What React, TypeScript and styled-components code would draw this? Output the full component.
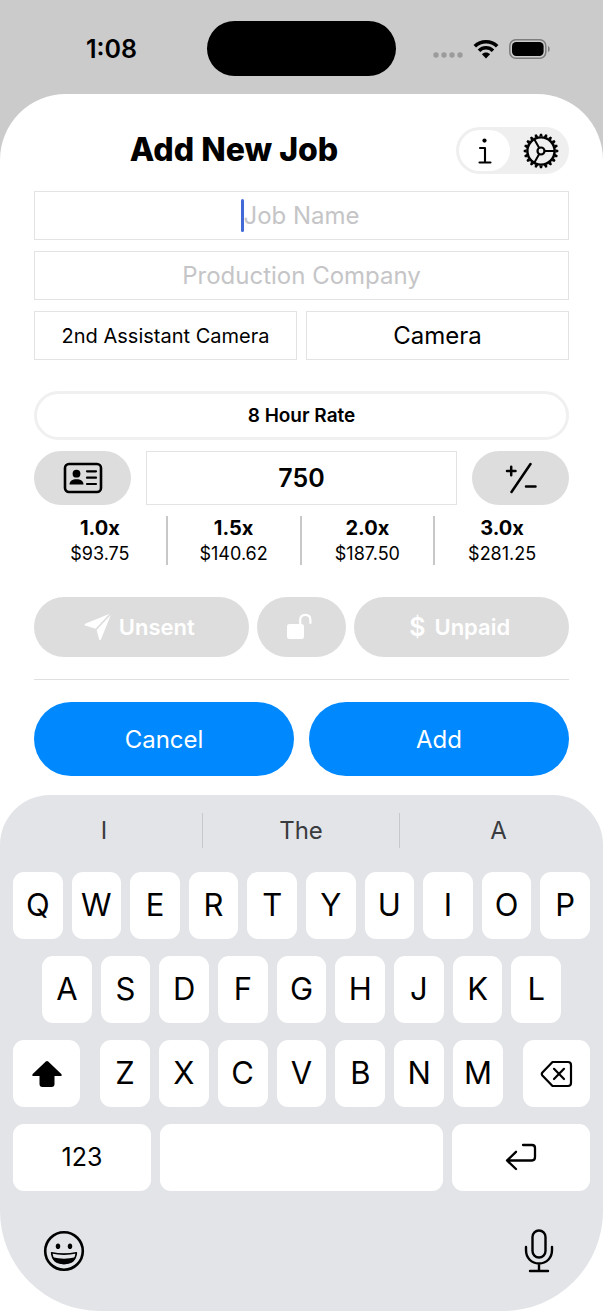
import React from "react";
import styled, { createGlobalStyle, css } from "styled-components";

const GlobalStyle = createGlobalStyle`
  *, *::before, *::after { box-sizing: border-box; }
  body { margin: 0; background: #cbcbcb; }
  body, button, input { font-family: Inter, "Liberation Sans", sans-serif; color: #000; }
  button { border: 0; margin: 0; padding: 0; background: none; cursor: pointer; }
  svg { display: block; flex: none; }
`;

const Screen = styled.div`
  min-height: 100vh;
  display: flex;
  flex-direction: column;
  background: #cbcbcb;
`;

const StatusBar = styled.header`
  display: grid;
  grid-template-columns: 1fr auto 1fr;
  align-items: center;
  height: 94px;
  padding: 3px 52px 0;
`;

const Clock = styled.time`
  padding-left: 34px;
  font-size: 25px;
  font-weight: 600;
  line-height: 30px;
`;

const Island = styled.div`
  width: 189px;
  height: 55px;
  border-radius: 28px;
  background: #000;
`;

const StatusIcons = styled.div`
  display: flex;
  justify-content: flex-end;
  align-items: center;
  gap: 10px;
`;

const Sheet = styled.main`
  flex: 1;
  display: flex;
  flex-direction: column;
  border-radius: 66px 66px 0 0;
  background: #fff;
`;

const Form = styled.form`
  display: flex;
  flex-direction: column;
  padding: 33px 34px 19px;
`;

const TitleRow = styled.div`
  display: flex;
  align-items: center;
  height: 47px;
  margin-bottom: 17px;
`;

const Title = styled.h1`
  flex: 1;
  margin: 0;
  padding: 0 22px 2px 0;
  text-align: center;
  font-size: 32px;
  font-weight: 800;
  line-height: 40px;
`;

const Segments = styled.fieldset`
  display: grid;
  grid-template-columns: 51px 1fr;
  gap: 5px;
  width: 113px;
  height: 47px;
  margin: 0;
  padding: 3px;
  border: 0;
  border-radius: 24px;
  background: #efefef;
`;

const Segment = styled.label`
  position: relative;
  display: flex;
  align-items: center;
  justify-content: center;
  border-radius: 21px;
  cursor: pointer;
  &:has(input:checked) { background: #fff; }
`;

const SegmentInput = styled.input`
  position: absolute;
  inset: 0;
  margin: 0;
  opacity: 0;
`;

const Fields = styled.div`
  display: flex;
  flex-direction: column;
  gap: 11px;
`;

const FieldRow = styled.div`
  display: grid;
  grid-template-columns: 1fr 1fr;
  gap: 9px;
`;

const boxed = css`
  border: 1px solid #e3e3e3;
  background: #fff;
  text-align: center;
`;

const FieldWrap = styled.div`
  position: relative;
`;

const Field = styled.input`
  ${boxed}
  display: block;
  width: 100%;
  height: 49px;
  padding: 0 8px;
  border-radius: 0;
  outline: 0;
  font-size: 24px;
  &::placeholder { color: #c5c5c7; opacity: 1; }
`;

const Caret = styled.span`
  position: absolute;
  left: calc(50% - 61px);
  top: 8px;
  width: 3px;
  height: 33px;
  border-radius: 2px;
  background: #4169d8;
`;

const Picker = styled.button<{ $size: number }>`
  ${boxed}
  height: 49px;
  font-size: ${(p) => p.$size}px;
`;

const RateType = styled.button`
  height: 49px;
  margin: 31px 0 11px;
  border: 3px solid #f0f0f0;
  border-radius: 25px;
  font-size: 19px;
  font-weight: 600;
`;

const RateRow = styled.div`
  display: grid;
  grid-template-columns: 97px 1fr 97px;
  gap: 15px;
`;

const GrayButton = styled.button`
  display: flex;
  align-items: center;
  justify-content: center;
  border-radius: 27px;
  background: #ddd;
`;

const RateInput = styled(Field)`
  height: 54px;
  font-size: 25px;
  font-weight: 600;
`;

const Multipliers = styled.dl`
  display: grid;
  grid-template-columns: repeat(4, 1fr);
  margin: 11px 0 32px;
`;

const Multiplier = styled.div`
  height: 49px;
  text-align: center;
  &:not(:last-child) { border-right: 2px solid #c8c8c8; }
`;

const Factor = styled.dt`
  font-size: 20px;
  font-weight: 700;
  line-height: 25px;
`;

const Amount = styled.dd`
  margin: 0;
  font-size: 18px;
  line-height: 26px;
`;

const StateRow = styled.div`
  display: grid;
  grid-template-columns: 215fr 90fr 215fr;
  gap: 8px;
  padding-bottom: 22px;
  border-bottom: 1px solid #dfdfdf;
`;

const StateButton = styled.button`
  display: flex;
  align-items: center;
  justify-content: center;
  gap: 7px;
  height: 60px;
  padding-right: 4px;
  border-radius: 30px;
  background: #ddd;
  color: #fff;
  font-size: 22px;
  font-weight: 600;
`;

const ActionRow = styled.div`
  display: grid;
  grid-template-columns: 1fr 1fr;
  gap: 15px;
  margin-top: 22px;
`;

const ActionButton = styled.button`
  height: 74px;
  border-radius: 37px;
  background: #0088ff;
  color: #fff;
  font-size: 24px;
`;

const Keyboard = styled.section`
  flex: 1;
  display: flex;
  flex-direction: column;
  padding: 18px 13px 0;
  border-radius: 50px 50px 100px 100px;
  background: #e2e4e8;
`;

const Suggestions = styled.div`
  display: grid;
  grid-template-columns: repeat(3, 1fr);
  margin: 0 -7px 24px;
`;

const Suggestion = styled.button`
  height: 35px;
  color: #3a3b3e;
  font-size: 24px;
  &:not(:last-child) { border-right: 1px solid #c6c8cc; }
`;

const KeyRows = styled.div`
  display: flex;
  flex-direction: column;
  gap: 17px;
`;

const KeyRow = styled.div<{ $inset?: number; $gap?: number }>`
  display: flex;
  gap: ${(p) => p.$gap ?? 9}px;
  padding: 0 ${(p) => p.$inset ?? 0}px;
`;

const Letters = styled.div`
  flex: 1;
  display: flex;
  gap: 9px;
`;

const Key = styled.button<{ $width?: number; $size?: number; $icon?: boolean }>`
  display: flex;
  align-items: center;
  justify-content: center;
  flex: ${(p) => (p.$width ? `0 0 ${p.$width}px` : "1 1 0")};
  min-width: 0;
  height: 67px;
  padding-bottom: ${(p) => (p.$icon ? 0 : 2)}px;
  border-radius: 11px;
  background: #fff;
  font-size: ${(p) => p.$size ?? 31}px;
`;

const KeyboardFooter = styled.div`
  display: flex;
  justify-content: space-between;
  align-items: center;
  padding: 38px 36px 36px 30px;
`;

const Dots = styled.span`
  padding-top: 13px;
`;

const WifiIcon = () => (
  <svg width="26" height="20" viewBox="0 0 26 20" fill="none" stroke="#000" strokeWidth="3.6">
    <path d="M1.8 7.2C8 1.2 18 1.2 24.2 7.2" />
    <path d="M6 11.7C10 7.8 16 7.8 20 11.7" />
    <path d="M13 19.4L8.9 15.3C11.2 13 14.8 13 17.1 15.3Z" fill="#000" stroke="none" />
  </svg>
);

const SignalDots = () => (
  <svg width="30" height="6" viewBox="0 0 30 6" fill="#9b9b9b">
    {[3, 11, 19, 27].map((x) => (
      <circle key={x} cx={x} cy="3" r="2.7" />
    ))}
  </svg>
);

const BatteryIcon = () => (
  <svg width="42" height="20" viewBox="0 0 42 20">
    <rect x="0.8" y="0.8" width="36" height="18.4" rx="6" fill="none" stroke="#7d7d7d" strokeWidth="1.5" />
    <rect x="3" y="3" width="31.6" height="14" rx="4.2" />
    <path d="M39 7c2.2.6 2.2 5.4 0 6z" fill="#7d7d7d" />
  </svg>
);

const InfoIcon = () => (
  <svg width="16" height="28" viewBox="0 0 16 28" fill="none" stroke="#000" strokeWidth="2.1" strokeLinecap="round" strokeLinejoin="round">
    <circle cx="7.5" cy="3.6" r="2.1" fill="#000" stroke="none" />
    <path d="M3 11h5v14.5M2.500 25.500h11" />
  </svg>
);

const GearIcon = () => (
  <svg width="36" height="36" viewBox="-18 -18 36 36" fill="none" stroke="#000" strokeWidth="2.4">
    <circle r="13.6" />
    <circle r="3.500" strokeWidth="2.2" />
    {[0, 120, 240].map((a) => (
      <path key={a} d="M3.500 0H13.500" strokeWidth="2" transform={`rotate(${a})`} />
    ))}
    {Array.from({ length: 20 }, (_, i) => (
      <path key={i} d="M14.400 -1.800L17.300 -1V1L14.400 1.800Z" fill="#000" stroke="none" transform={`rotate(${i * 18})`} />
    ))}
  </svg>
);

const CardIcon = () => (
  <svg width="40" height="32" viewBox="0 0 40 32">
    <rect x="2" y="2" width="36" height="28" rx="4" fill="none" stroke="#000" strokeWidth="2.6" />
    <circle cx="13.5" cy="11.7" r="3.9" />
    <path d="M6.500 22.500C6.500 19 9.500 17.200 13.500 17.200S20.500 19 20.500 22.500Z" />
    <path d="M24 9.300h9M24 15.700h9M24 22h9" stroke="#000" strokeWidth="2.2" strokeLinecap="round" />
  </svg>
);

const PlusMinusIcon = () => (
  <svg width="34" height="32" viewBox="0 0 34 32" fill="none" stroke="#000" strokeWidth="2.5" strokeLinecap="round">
    <path d="M26.500 2L7.500 30M3 9h8.500M7.200 4.700v8.600M22 24.500h9.500" />
  </svg>
);

const SendIcon = () => (
  <svg width="28" height="28" viewBox="0 0 28 28" fill="#fff">
    <path d="M25.600 .8L1.200 10.800c-.9.400-.8 1.500.1 1.800L11.500 15.800Z" />
    <path d="M26.900 1.800L12.600 17L15.200 26.500c.3 1 1.300 1 1.700.1Z" />
  </svg>
);

const LockIcon = () => (
  <svg width="26" height="28" viewBox="0 0 26 28">
    <rect x="1" y="11" width="17" height="15" rx="2.5" fill="#fff" />
    <path d="M14.200 12V7C14.200 3.600 16.200 1.800 19.300 1.800S24.400 3.600 24.400 7V10" fill="none" stroke="#fff" strokeWidth="2.2" strokeLinecap="round" />
  </svg>
);

const DollarSign = styled.span`
  padding-right: 2px;
  font-size: 25px;
  line-height: 30px;
`;

const ShiftIcon = () => (
  <svg width="32" height="28" viewBox="0 0 32 28">
    <path d="M14.800 1.500Q16 .5 17.200 1.500L30.300 14Q31.500 16 29.500 16H23.500V24Q23.500 27 20.500 27H11.500Q8.500 27 8.500 24V16H2.500Q.5 16 1.700 14Z" />
  </svg>
);

const DeleteIcon = () => (
  <svg width="33" height="28" viewBox="0 0 33 28" fill="none" stroke="#000" strokeWidth="2.2" strokeLinecap="round" strokeLinejoin="round">
    <path d="M12.500 2H28Q31 2 31 5V23Q31 26 28 26H12.500L2.400 15.500Q1.200 14 2.400 12.500Z" />
    <path d="M14 8.800L24 19M24 8.800L14 19" />
  </svg>
);

const ReturnIcon = () => (
  <svg width="32" height="28" viewBox="0 0 32 28" fill="none" stroke="#000" strokeWidth="2.3" strokeLinecap="round" strokeLinejoin="round">
    <path d="M18 2H27Q30 2 30 5V14Q30 17.500 27 17.500H2M11 8.800L2 17.500L11 26" />
  </svg>
);

const EmojiIcon = () => (
  <svg width="42" height="42" viewBox="0 0 42 42">
    <circle cx="21" cy="21" r="18.800" fill="none" stroke="#000" strokeWidth="2.6" />
    <ellipse cx="15" cy="16.3" rx="2.200" ry="2.800" />
    <ellipse cx="27" cy="16.3" rx="2.200" ry="2.800" />
    <path d="M8.600 22.800Q21 25.500 33.400 22.800Q32.500 33.600 21 33.600T8.600 22.800Z" fill="none" stroke="#000" strokeWidth="1.6" strokeLinejoin="round" />
    <path d="M9.500 27.300Q21 30 32.500 27.300Q29.500 34 21 34T9.500 27.300Z" />
  </svg>
);

const MicIcon = () => (
  <svg width="30" height="44" viewBox="0 0 30 44" fill="none" stroke="#000" strokeWidth="2.4" strokeLinecap="round">
    <rect x="8.500" y="1.500" width="13" height="27" rx="6.500" />
    <path d="M2 18V21C2 29 7.500 34.500 15 34.500S28 29 28 21V18M15 34.500V42M6 42H24" />
  </svg>
);

const multipliers = [
  ["1.0x", "$93.75"],
  ["1.5x", "$140.62"],
  ["2.0x", "$187.50"],
  ["3.0x", "$281.25"],
];

const letterKeys = (row: string) => row.split("").map((l) => <Key type="button" key={l}>{l}</Key>);

export default function App() {
  return (
    <Screen>
      <GlobalStyle />
      <StatusBar>
        <Clock>1:08</Clock>
        <Island />
        <StatusIcons>
          <Dots><SignalDots /></Dots>
          <WifiIcon />
          <BatteryIcon />
        </StatusIcons>
      </StatusBar>
      <Sheet>
        <Form onSubmit={(e) => e.preventDefault()}>
          <TitleRow>
            <Title>Add New Job</Title>
            <Segments aria-label="View">
              <Segment>
                <SegmentInput type="radio" name="view" aria-label="Info" defaultChecked />
                <InfoIcon />
              </Segment>
              <Segment>
                <SegmentInput type="radio" name="view" aria-label="Settings" />
                <GearIcon />
              </Segment>
            </Segments>
          </TitleRow>
          <Fields>
            <FieldWrap>
              <Field aria-label="Job Name" placeholder="Job Name" />
              <Caret />
            </FieldWrap>
            <Field aria-label="Production Company" placeholder="Production Company" />
            <FieldRow>
              <Picker type="button" $size={20}>2nd Assistant Camera</Picker>
              <Picker type="button" $size={24}>Camera</Picker>
            </FieldRow>
          </Fields>
          <RateType type="button">8 Hour Rate</RateType>
          <RateRow>
            <GrayButton type="button" aria-label="Rate card"><CardIcon /></GrayButton>
            <RateInput aria-label="Rate" defaultValue="750" />
            <GrayButton type="button" aria-label="Adjust rate"><PlusMinusIcon /></GrayButton>
          </RateRow>
          <Multipliers>
            {multipliers.map(([factor, amount]) => (
              <Multiplier key={factor}>
                <Factor>{factor}</Factor>
                <Amount>{amount}</Amount>
              </Multiplier>
            ))}
          </Multipliers>
          <StateRow>
            <StateButton type="button"><SendIcon />Unsent</StateButton>
            <StateButton type="button" aria-label="Unlocked"><LockIcon /></StateButton>
            <StateButton type="button"><DollarSign>$</DollarSign>Unpaid</StateButton>
          </StateRow>
          <ActionRow>
            <ActionButton type="button">Cancel</ActionButton>
            <ActionButton type="submit">Add</ActionButton>
          </ActionRow>
        </Form>
        <Keyboard aria-label="Keyboard">
          <Suggestions>
            <Suggestion type="button">I</Suggestion>
            <Suggestion type="button">The</Suggestion>
            <Suggestion type="button">A</Suggestion>
          </Suggestions>
          <KeyRows>
            <KeyRow>{letterKeys("QWERTYUIOP")}</KeyRow>
            <KeyRow $inset={29}>{letterKeys("ASDFGHJKL")}</KeyRow>
            <KeyRow $gap={20}>
              <Key type="button" $width={67} $icon aria-label="Shift"><ShiftIcon /></Key>
              <Letters>{letterKeys("ZXCVBNM")}</Letters>
              <Key type="button" $width={67} $icon aria-label="Delete"><DeleteIcon /></Key>
            </KeyRow>
            <KeyRow>
              <Key type="button" $width={138} $size={25}>123</Key>
              <Key type="button" aria-label="Space" />
              <Key type="button" $width={138} aria-label="Return"><ReturnIcon /></Key>
            </KeyRow>
          </KeyRows>
          <KeyboardFooter>
            <button type="button" aria-label="Emoji"><EmojiIcon /></button>
            <button type="button" aria-label="Dictate"><MicIcon /></button>
          </KeyboardFooter>
        </Keyboard>
      </Sheet>
    </Screen>
  );
}
